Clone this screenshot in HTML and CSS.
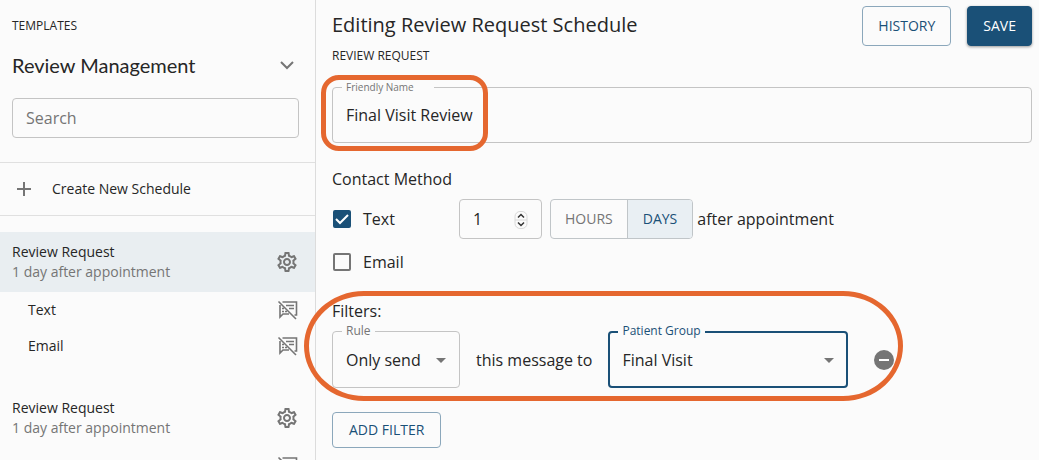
FILE: index.html
```html
<!DOCTYPE html>
<html lang="en">
<head>
  <meta charset="UTF-8" />
  <meta name="viewport" content="width=device-width, initial-scale=1" />
  <title>Editing Review Request Schedule</title>
  <link rel="stylesheet" href="styles.css">
</head>
<body>
  <!-- Shared icons -->
  <svg class="sprite" aria-hidden="true">
    <symbol id="gear" viewBox="0 0 24 24">
      <path d="M19.43 12.98c.04-.32.07-.64.07-.98s-.03-.66-.07-.98l2.11-1.65c.19-.15.24-.42.12-.64l-2-3.46c-.09-.16-.26-.25-.44-.25-.06 0-.12.01-.17.03l-2.49 1c-.52-.4-1.08-.73-1.69-.98l-.38-2.65C14.46 2.18 14.25 2 14 2h-4c-.25 0-.46.18-.49.42l-.38 2.65c-.61.25-1.17.59-1.69.98l-2.49-1c-.06-.02-.12-.03-.18-.03-.17 0-.34.09-.43.25l-2 3.46c-.13.22-.07.49.12.64l2.11 1.65c-.04.32-.07.65-.07.98s.03.66.07.98l-2.11 1.65c-.19.15-.24.42-.12.64l2 3.46c.09.16.26.25.44.25.06 0 .12-.01.17-.03l2.49-1c.52.4 1.08.73 1.69.98l.38 2.65c.03.24.24.42.49.42h4c.25 0 .46-.18.49-.42l.38-2.65c.61-.25 1.17-.59 1.69-.98l2.49 1c.06.02.12.03.18.03.17 0 .34-.09.43-.25l2-3.46c.12-.22.07-.49-.12-.64l-2.11-1.65zm-1.98-1.71c.04.31.05.52.05.73 0 .21-.02.43-.05.73l-.14 1.13.89.7 1.08.84-.7 1.21-1.27-.51-1.04-.42-.9.68c-.43.32-.84.56-1.25.73l-1.06.43-.16 1.13-.2 1.35h-1.4l-.19-1.35-.16-1.13-1.06-.43c-.43-.18-.83-.41-1.23-.71l-.91-.7-1.06.43-1.27.51-.7-1.21 1.08-.84.89-.7-.14-1.13c-.03-.31-.05-.54-.05-.74s.02-.43.05-.73l.14-1.13-.89-.7-1.08-.84.7-1.21 1.27.51 1.04.42.9-.68c.43-.32.84-.56 1.25-.73l1.06-.43.16-1.13.2-1.35h1.39l.19 1.35.16 1.13 1.06.43c.43.18.83.41 1.23.71l.91.7 1.06-.43 1.27-.51.7 1.21-1.07.85-.89.7.14 1.13zM12 8c-2.21 0-4 1.79-4 4s1.79 4 4 4 4-1.79 4-4-1.79-4-4-4zm0 6c-1.1 0-2-.9-2-2s.9-2 2-2 2 .9 2 2-.9 2-2 2z"/>
    </symbol>
    <symbol id="muted" viewBox="0 0 24 24">
      <g fill="none" stroke="currentColor" stroke-width="1.6">
        <path d="M7.500 4h14v13h-2M5 7v12l3-3h6M3.500 3.500l17.500 17.500"/>
        <path d="M11 7.500h8M14 10.500h5" stroke-width="1.4"/>
        <path d="M7 10.500h2M7 13.500h2M10 13.500h2" stroke-width="1.4"/>
      </g>
    </symbol>
    <symbol id="arrow" viewBox="0 0 24 24">
      <path d="M7 10l5 5 5-5z"/>
    </symbol>
  </svg>

  <div class="app">
    <!-- Template list -->
    <aside class="sidebar">
      <div class="sidebar-top">
        <div class="overline">TEMPLATES</div>
        <button type="button" class="category">
          Review Management
          <svg class="chevron" viewBox="0 0 24 24"><path d="M6 9l6 6 6-6"/></svg>
        </button>
        <input class="search" type="search" placeholder="Search" aria-label="Search">
      </div>

      <button type="button" class="create">
        <svg class="plus" viewBox="0 0 24 24"><path d="M12 5v14M5 12h14"/></svg>
        Create New Schedule
      </button>

      <div class="group">
        <div class="schedule selected">
          <div>
            <div>Review Request</div>
            <div class="muted-text">1 day after appointment</div>
          </div>
          <button type="button" class="icon-button" aria-label="Settings"><svg class="icon"><use href="#gear"/></svg></button>
        </div>
        <div class="message"><span>Text</span> <svg class="icon"><use href="#muted"/></svg></div>
        <div class="message"><span>Email</span> <svg class="icon"><use href="#muted"/></svg></div>
      </div>

      <div class="group">
        <div class="schedule">
          <div>
            <div>Review Request</div>
            <div class="muted-text">1 day after appointment</div>
          </div>
          <button type="button" class="icon-button" aria-label="Settings"><svg class="icon"><use href="#gear"/></svg></button>
        </div>
        <div class="message"><span></span> <svg class="icon"><use href="#muted"/></svg></div>
      </div>
    </aside>

    <!-- Schedule editor -->
    <main class="editor">
      <header class="editor-header">
        <h1>Editing Review Request Schedule</h1>
        <div class="actions">
          <button type="button" class="btn">HISTORY</button>
          <button type="button" class="btn btn-primary">SAVE</button>
        </div>
      </header>
      <div class="overline">REVIEW REQUEST</div>

      <div class="field name-field">
        <label class="name-label" for="friendlyName">Friendly Name</label>
        <input id="friendlyName" type="text" value="Final Visit Review">
        <div class="highlight highlight-name"></div>
      </div>

      <h2>Contact Method</h2>
      <div class="method">
        <label class="check">
          <input type="checkbox" checked>
          <svg class="tick" viewBox="0 0 18 18"><path d="M3 9l4 4 8-8"/></svg>
          Text
        </label>
        <div class="number">
          <input type="number" value="1" aria-label="Amount">
          <svg class="spinner" viewBox="0 0 14 18">
            <rect x="1" y="0.5" width="12" height="17" rx="5"/>
            <path class="divider" d="M1 9h12"/>
            <path d="M4 6.500l3-3 3 3M4 11.500l3 3 3-3"/>
          </svg>
        </div>
        <div class="toggle">
          <button type="button">HOURS</button>
          <button type="button" class="on">DAYS</button>
        </div>
        <span>after appointment</span>
      </div>
      <div class="method method-email">
        <label class="check">
          <input type="checkbox">
          Email
        </label>
      </div>

      <section class="filters">
        <h2>Filters:</h2>
        <div class="filter-row">
          <div class="field rule-field">
            <label for="rule">Rule</label>
            <select id="rule"><option>Only send</option></select>
            <svg class="arrow"><use href="#arrow"/></svg>
          </div>
          <span>this message to</span>
          <div class="field group-field">
            <label for="patientGroup">Patient Group</label>
            <select id="patientGroup"><option>Final Visit</option></select>
            <svg class="arrow"><use href="#arrow"/></svg>
          </div>
          <button type="button" class="remove" aria-label="Remove filter">
            <svg viewBox="0 0 24 24"><circle cx="12" cy="12" r="10"/><path d="M7 12h10"/></svg>
          </button>
        </div>
        <div class="highlight highlight-filters"></div>
      </section>
      <button type="button" class="btn btn-add">ADD FILTER</button>
    </main>
  </div>
</body>
</html>
```
FILE: styles.css
```css
/* Basic resets */
* {
  box-sizing: border-box;
}
body {
  margin: 0;
  overflow: hidden;
  background: #fbfbfb;
  color: #262626;
  font-family: "Open Sans", "Noto Sans", sans-serif;
  font-size: 16px;
  line-height: 24px;
}
button, input, select {
  font: inherit;
  color: inherit;
  background: none;
  border: none;
  margin: 0;
  padding: 0;
}
button {
  cursor: pointer;
}
h1, h2 {
  margin: 0;
  font-weight: 400;
}
h1 {
  font-size: 20px;
  line-height: 32px;
}
h2 {
  font-size: 16px;
}
.sprite {
  display: none;
}
.app {
  display: flex;
  height: 100vh;
}
.overline {
  font-size: 12px;
  line-height: 20px;
}

/* Sidebar */
.sidebar {
  flex: 0 0 316px;
  overflow: hidden;
  border-right: 1px solid #dcdcdc;
  font-size: 14px;
  line-height: 20px;
}
.sidebar-top {
  padding: 16px 16px 24px 12px;
  border-bottom: 1px solid #e0e0e0;
}
.category {
  display: flex;
  justify-content: space-between;
  align-items: center;
  width: 100%;
  margin: 13px 0 17px;
  font-family: Lato, sans-serif;
  font-size: 20px;
  line-height: 32px;
}
.chevron {
  width: 24px;
  height: 24px;
  fill: none;
  stroke: #757575;
  stroke-width: 2;
}
.search {
  display: block;
  width: 100%;
  height: 40px;
  padding: 0 13px;
  border: 1px solid #c4c4c4;
  border-radius: 4px;
  font-size: 16px;
}
.search::placeholder {
  color: #757575;
}
.create {
  display: flex;
  align-items: center;
  gap: 16px;
  width: 100%;
  height: 53px;
  padding: 0 12px;
  border-bottom: 1px solid #e0e0e0;
}
.plus {
  width: 24px;
  height: 24px;
  fill: none;
  stroke: #757575;
  stroke-width: 2;
}
.group {
  margin-top: 16px;
}
.group + .group {
  margin-top: 24px;
}
.schedule, .message {
  display: flex;
  justify-content: space-between;
  align-items: center;
  padding: 0 16px 0 12px;
}
.schedule {
  height: 60px;
}
.selected {
  background: #e9eef1;
}
.muted-text {
  color: #757575;
}
.message {
  height: 36px;
  padding-left: 28px;
}
.icon-button {
  display: flex;
}
.icon {
  width: 24px;
  height: 24px;
  fill: #757575;
  color: #757575;
}

/* Editor */
.editor {
  flex: 1;
  padding: 6px 7px 0 16px;
}
.editor-header {
  display: flex;
  justify-content: space-between;
}
.editor-header h1 {
  padding-top: 3px;
}
.actions {
  display: flex;
  gap: 16px;
}
.btn {
  height: 40px;
  padding: 0 15px;
  border: 1px solid #8ba7bb;
  border-radius: 4px;
  color: #1a5077;
  font-size: 14px;
}
.btn-primary {
  border-color: #1a5077;
  background: #1a5077;
  color: #fff;
  box-shadow: 0 1px 3px rgba(0, 0, 0, 0.4);
}
.btn-add {
  height: 36px;
  margin-top: 24px;
  padding: 0 16px;
}

/* Outlined fields with the label on the border */
.field {
  position: relative;
}
.field label {
  position: absolute;
  top: -8px;
  left: 10px;
  padding: 0 4px;
  background: #fbfbfb;
  color: #757575;
  font-size: 12px;
  line-height: 16px;
}
.field input, .field select {
  display: block;
  width: 100%;
  height: 56px;
  padding: 0 13px;
  border: 1px solid #c4c4c4;
  border-radius: 4px;
  appearance: none;
  outline: none;
}
.field .name-label {
  padding-right: 20px;
  font-size: 10px;
}
.name-field {
  margin: 21px 0 24px;
}
.arrow {
  position: absolute;
  top: 17px;
  right: 7px;
  width: 24px;
  height: 24px;
  fill: #757575;
  pointer-events: none;
}

/* Contact method */
.method {
  display: flex;
  align-items: center;
  height: 40px;
  margin-top: 8px;
}
.method-email {
  height: 24px;
  margin-top: 11px;
}
.check {
  display: flex;
  align-items: center;
  gap: 12px;
  width: 127px;
  padding-left: 1px;
  position: relative;
}
.check input {
  width: 18px;
  height: 18px;
  border: 2px solid #757575;
  border-radius: 2px;
  appearance: none;
}
.check input:checked {
  border-color: #1a5077;
  background: #1a5077;
}
.tick {
  position: absolute;
  left: 1px;
  width: 18px;
  height: 18px;
  fill: none;
  stroke: #fff;
  stroke-width: 2;
}
.number {
  position: relative;
  margin-right: 8px;
}
.number input {
  display: block;
  width: 83px;
  height: 40px;
  padding: 0 13px;
  border: 1px solid #c4c4c4;
  border-radius: 4px;
  appearance: textfield;
}
.spinner {
  position: absolute;
  top: 12px;
  right: 14px;
  width: 14px;
  height: 18px;
  fill: none;
  stroke: #333;
  stroke-width: 1.5;
}
.spinner rect, .spinner .divider {
  stroke: #d8d8d8;
  stroke-width: 1;
}
.toggle {
  display: flex;
  height: 40px;
  margin-right: 4px;
  border: 1px solid #c0c5c8;
  border-radius: 4px;
  overflow: hidden;
  color: #757575;
  font-size: 14px;
}
.toggle button {
  padding: 0 14px;
}
.toggle .on {
  padding: 0 15px;
  border-left: 1px solid #c0c5c8;
  background: #e9eff3;
  color: #1a5077;
}

/* Filters */
.filters {
  position: relative;
  margin-top: 25px;
}
.filter-row {
  display: flex;
  align-items: center;
  gap: 16px;
  margin-top: 8px;
}
.filter-row select {
  height: 57px;
}
.rule-field {
  width: 128px;
}
.group-field {
  width: 240px;
}
.field.group-field label {
  color: #1a5077;
}
.group-field select {
  padding: 0 12px;
  border: 2px solid #1a5077;
}
.remove {
  display: flex;
  margin-left: 8px;
}
.remove svg {
  width: 24px;
  height: 24px;
  fill: #757575;
}
.remove path {
  stroke: #fff;
  stroke-width: 2;
}

/* Orange callouts drawn over the form */
.highlight {
  position: absolute;
  border: 5px solid #e5672f;
  pointer-events: none;
}
.highlight-name {
  top: -12px;
  left: -11px;
  width: 167px;
  height: 76px;
  border-radius: 18px;
}
.highlight-filters {
  top: -8px;
  left: -28px;
  width: 599px;
  height: 110px;
  border-radius: 60px / 55px;
}
```
